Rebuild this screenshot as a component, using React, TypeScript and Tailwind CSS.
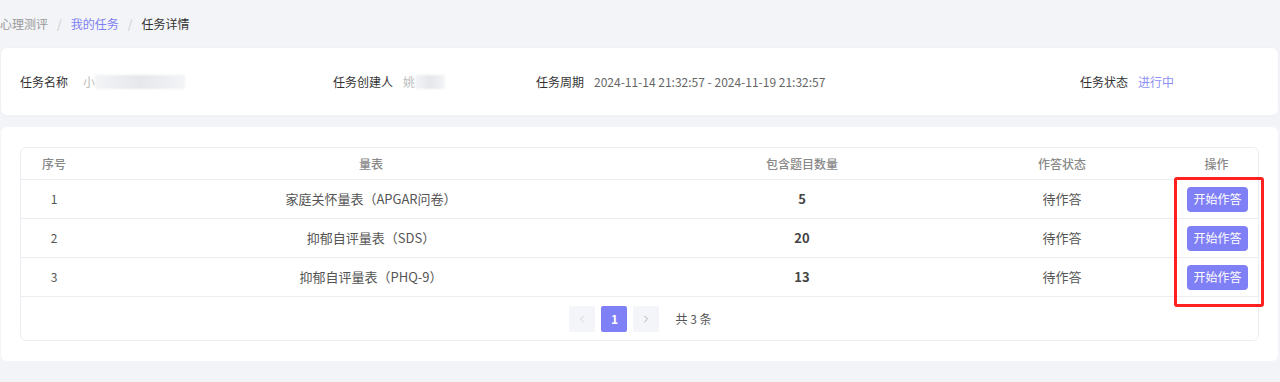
import { ChevronLeft, ChevronRight } from 'lucide-react';

const rows = [
  { id: 1, name: '家庭关怀量表（APGAR问卷）', count: 5 },
  { id: 2, name: '抑郁自评量表（SDS）', count: 20 },
  { id: 3, name: '抑郁自评量表（PHQ-9）', count: 13 },
];

function Blur({ w }: { w: number }) {
  return (
    <span className="inline-flex h-[14px] items-center align-middle" style={{ width: w }}>
      <span className="h-full flex-1 bg-gradient-to-r from-gray-100 via-gray-200 to-gray-100 blur-[1px]" />
    </span>
  );
}

export default function App() {
  return (
    <div className="min-h-[382px] bg-[#f3f4f7] pb-5 text-[12px] text-[#333] [font-family:'Noto_Sans_CJK_SC','Noto_Sans',sans-serif]">
      {/* breadcrumb */}
      <div className="flex h-[48px] items-center gap-[9px] text-[12px]">
        <span className="text-[#999]">心理测评</span>
        <span className="text-[#ccc]">/</span>
        <span className="text-[#7d7ff3]">我的任务</span>
        <span className="text-[#ccc]">/</span>
        <span className="text-[#333]">任务详情</span>
      </div>

      {/* info card */}
      <div className="ml-[1px] mr-[2px] flex h-[67px] items-center rounded-md bg-white px-[19px] shadow-[0_0_3px_rgba(0,0,0,0.04)]">
        <div className="flex w-[313px] items-center">
          <span className="w-[63px]">任务名称</span>
          <span className="text-[#bbb]">小</span>
          <Blur w={90} />
        </div>
        <div className="flex w-[203px] items-center">
          <span className="w-[70px]">任务创建人</span>
          <span className="text-[#bbb]">姚</span>
          <Blur w={30} />
        </div>
        <div className="flex w-[544px] items-center">
          <span className="w-[58px]">任务周期</span>
          <span className="text-[#666]">2024-11-14 21:32:57 - 2024-11-19 21:32:57</span>
        </div>
        <div className="flex items-center">
          <span className="w-[58px]">任务状态</span>
          <span className="text-[#8d8ff5]">进行中</span>
        </div>
      </div>

      {/* table card */}
      <div className="ml-[1px] mr-[2px] mt-3 rounded-md bg-white px-[19px] py-5">
        <div className="overflow-hidden rounded-md border border-[#ebedf2]">
          <div className="grid h-[32px] grid-cols-[66px_568px_294px_226px_1fr] items-center border-b border-[#ebedf2] text-center text-[12px] font-medium text-[#888]">
            <div>序号</div>
            <div>量表</div>
            <div>包含题目数量</div>
            <div>作答状态</div>
            <div>操作</div>
          </div>
          {rows.map((r) => (
            <div
              key={r.id}
              className="grid h-[39px] grid-cols-[66px_568px_294px_226px_1fr] items-center border-b border-[#ebedf2] text-center text-[13px] text-[#555]"
            >
              <div className="text-[12px]">{r.id}</div>
              <div>{r.name}</div>
              <div className="font-semibold text-[#444]">{r.count}</div>
              <div>待作答</div>
              <div className="flex justify-center pl-[2px]">
                <button className="h-[25px] w-[61px] rounded-[4px] bg-[#7f80f6] text-[12px] text-white">开始作答</button>
              </div>
            </div>
          ))}
          <div className="flex h-[43px] items-center justify-center gap-[6px] pl-[2px] text-[12px]">
            <span className="flex h-[26px] w-[26px] items-center justify-center rounded-[2px] bg-[#f4f5f8] text-[#c0c4cc]">
              <ChevronLeft size={12} strokeWidth={1.5} />
            </span>
            <span className="flex h-[26px] w-[26px] items-center justify-center rounded-[2px] bg-[#7f80f6] font-bold text-white">1</span>
            <span className="flex h-[26px] w-[26px] items-center justify-center rounded-[2px] bg-[#f4f5f8] text-[#999]">
              <ChevronRight size={12} strokeWidth={1.5} />
            </span>
            <span className="ml-[10px] text-[#555]">共 3 条</span>
          </div>
        </div>
      </div>

      {/* highlight box */}
      <div className="pointer-events-none absolute left-[1174px] top-[177px] h-[130px] w-[90px] rounded-[3px] border-[3px] border-[#ff2020]" />
    </div>
  );
}
